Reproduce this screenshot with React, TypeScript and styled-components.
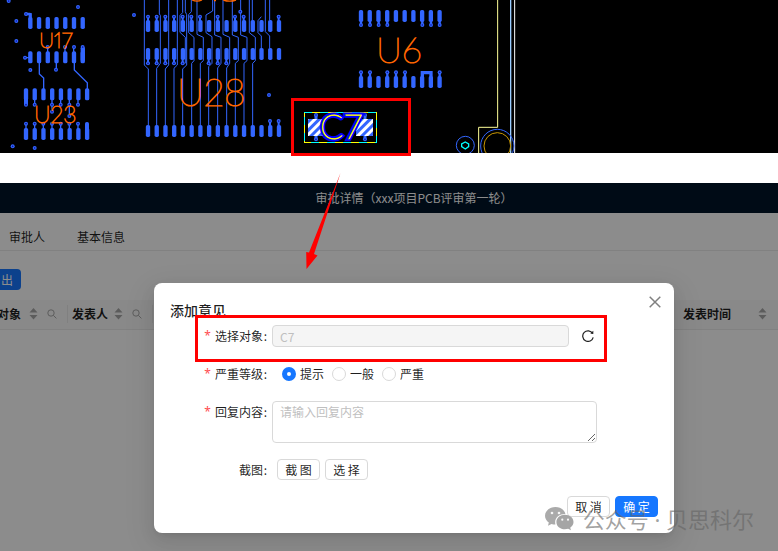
import React from "react";
import styled, { createGlobalStyle, css } from "styled-components";

const GlobalStyle = createGlobalStyle`
  *, *::before, *::after { box-sizing: border-box; }
  body {
    margin: 0;
    background: #fff;
    color: rgba(0, 0, 0, 0.88);
    font: 12px/20px "Noto Sans CJK SC", sans-serif;
  }
  button, input, textarea { font: inherit; color: inherit; }
`;

const Page = styled.div`
  position: relative;
  display: flex;
  flex-direction: column;
  gap: 30px;
  min-height: 100vh;
  overflow: hidden;
`;

/* ---------- board viewer ---------- */

const Board = styled.section`
  position: relative;
  background: #000;
`;

const BoardDrawing = styled.svg`
  display: block;
  width: 778px;
  height: 153px;
`;

const Silk = styled.text<{ $size: number }>`
  font-family: Lato, sans-serif;
  font-weight: 100;
  font-size: ${(p) => p.$size}px;
  font-variant-numeric: proportional-nums;
  fill: #ff6600;
  stroke: #ff6600;
  stroke-width: 1px;
`;

const HighlightBase = styled.text`
  font-family: Lato, sans-serif;
  font-weight: 100;
  font-size: 34px;
`;

const HighlightHalo = styled(HighlightBase)`
  fill: #0000ff;
  stroke: #0000ff;
  stroke-width: 5px;
`;

const HighlightLetters = styled(HighlightBase)`
  fill: #ffff00;
  stroke: #ffff00;
  stroke-width: 0.8px;
`;

const BLUE = "#3366ff";

type PadRowProps = { x: number; y: number; count: number; height?: number };
const PadRow = ({ x, y, count, height = 36 }: PadRowProps) => (
  <>
    {Array.from({ length: count }, (_, i) => (
      <rect key={i} x={x + i * 26.2 - 6.5} y={y} width={13} height={height} rx={5} fill={BLUE} />
    ))}
  </>
);

const Vias = ({ at }: { at: [number, number][] }) => (
  <>
    {at.map(([x, y]) => (
      <g key={`${x}-${y}`}>
        <circle cx={x} cy={y} r={6} fill={BLUE} />
        <circle cx={x} cy={y} r={2.5} fill="#0a14a0" />
      </g>
    ))}
  </>
);

const row = (xs: number[], y: number) => xs.map((x) => [x, y] as [number, number]);

const u28Traces = [
  "M43 0V195L55 207V375",
  "M88 0V42L91 46V190L80 205V375",
  "M116 0V195L106 207V375",
  "M142 0V195L132 205V375",
  "M166 0V35L170 44V195L158 207V375",
  "M158 0V38L150 46V97L166 112V190",
  "M184 0V35L176 44V98L192 112V182L185 190V375",
  "M201 0V103L220 112V182L211 190V375",
  "M248 0V33L228 45V98L246 110V190L236 200V375",
  "M254 0V105L273 112V190L263 204V375",
  "M279 0V103L299 112V190L290 204V375",
  "M307 0V105L325 112V182L316 190V375",
  "M332 0V105L351 112V182L342 190V375",
  "M358 0V98L376 112V182L368 190V375",
  "M367 0V62",
  "M394 50L384 62V98L394 108V145",
  "M406 0V95L419 108V145",
  "M419 0V60",
].join("");

const PcbView = () => (
  <BoardDrawing viewBox="0 0 778 153" role="img" aria-label="PCB">
    <defs>
      <pattern id="hatch" width="18" height="18" patternUnits="userSpaceOnUse" patternTransform="rotate(45)">
        <rect width="18" height="18" fill="#fff" />
        <rect width="9" height="18" fill={BLUE} />
      </pattern>
    </defs>

    <g transform="scale(.3333)">
      <path
        d="M118 185V222L131 234V270M223 185V210L262 248V270M169 185V209M143 142V160M195 142V160M221 142V160M78 41H93V60M75 173H90M78 290V314M104 290V314M156 290V335M182 290V314M208 290V348M234 290V314M78 370V390M104 370V390M130 370V390M156 370V390M182 370V390M208 370V390M234 370V390"
        fill="none"
        stroke={BLUE}
        strokeWidth="4"
      />
      <path d="M78 38H90Q95 38 95 44V60H86V46H78Z" fill={BLUE} />
      <PadRow x={91} y={51} count={7} />
      <PadRow x={91} y={154} count={7} />
      <rect x={242} y={140} width={13} height={45} rx={5} fill={BLUE} />
      <PadRow x={78} y={265} count={8} />
      <rect x={72} y={270} width={12} height={46} rx={5} fill={BLUE} />
      <PadRow x={78} y={384} count={8} />
      <rect x={255} y={366} width={12} height={50} rx={5} fill={BLUE} />
      <Vias
        at={[
          [26, 3], [234, 21], [49, 63], [49, 123], [78, 42], [75, 173], [91, 210], [168, 209],
          [38, 439], [104, 444], [156, 335], [208, 348], [402, 45],
          ...row([143, 195, 222, 248], 141),
          ...row([78, 104, 156, 182, 208, 234], 314),
          ...row([78, 104, 130, 156, 182, 208, 234], 371),
        ]}
      />
    </g>

    <g transform="translate(130) scale(.3333)">
      <path d={u28Traces} fill="none" stroke={BLUE} strokeWidth="3" />
      <PadRow x={54} y={60} count={16} />
      <PadRow x={54} y={144} count={16} />
      <PadRow x={54} y={375} count={16} />
      <path
        d="M54 50V64M80 50V64M106 50V64M132 50V64M158 50V64M184 50V64M210 50V64M263 50V64M315 50V64M341 50V64M446 50V64M54 176V190M80 176V190M106 176V190M132 176V190M158 176V190M236 176V190M263 176V190M289 176V190M420 363V380M446 363V380"
        stroke={BLUE}
        strokeWidth="6"
      />
      <Vias
        at={[
          [417, 285], [331, 35],
          ...row([54, 80, 106, 132, 158, 184, 210, 263, 315, 341, 446], 50),
          ...row([54, 80, 106, 132, 158, 236, 263, 289], 190),
          ...row([420, 446], 363),
        ]}
      />
      <path d="M186 0Q201 7 216 0M252 2H258M280 0Q299 7 318 0" fill="none" stroke="#ff6600" strokeWidth="4" />
    </g>

    <g transform="translate(340) scale(.3333)">
      <PadRow x={63} y={30} count={10} />
      <PadRow x={63} y={228} count={10} />
      <path
        d="M63 62V76M90 62V76M116 62V76M142 62V76M247 62V76M273 62V76M299 62V76M63 216V232M90 216V232M142 216V232M168 216V232M195 216V232M299 216V232"
        stroke={BLUE}
        strokeWidth="7"
      />
      <Vias at={[...row([63, 90, 116, 142, 247, 273, 299], 75), ...row([63, 90, 142, 168, 195, 299], 217)]} />
      <path d="M247 245V218H273V245" fill="none" stroke={BLUE} strokeWidth="10" />
      <g fill="none" strokeWidth="3">
        <path d="M473 0V382H416V460" stroke="#ffff99" />
        <path d="M512 0V460" stroke="#99ccff" strokeWidth="4" />
        <path d="M524 0V460" stroke="#fff" />
        <circle cx="376" cy="436" r="27" stroke={BLUE} />
        <path d="M376 426L386 432V440L376 447L365 440V432Z" stroke="#00ffff" strokeWidth="4" />
        <circle cx="472" cy="438" r="50" stroke={BLUE} />
        <circle cx="472" cy="438" r="40" stroke="#cc9900" />
      </g>
    </g>

    <Silk x="39" y="48" $size={21}>U17</Silk>
    <Silk x="34" y="123" $size={23}>U23</Silk>
    <Silk x="177" y="106" $size={37}>U28</Silk>
    <Silk x="376" y="63" $size={36}>U6</Silk>

    <g transform="translate(280 80) scale(.3333)">
      <rect x="73" y="97" width="217" height="90" fill="none" stroke="#ffff00" strokeWidth="3" shapeRendering="crispEdges" />
      <rect x="73" y="97" width="217" height="90" fill="none" stroke="#00ffff" strokeWidth="3" strokeDasharray="24 24" shapeRendering="crispEdges" />
      <path d="M108 105V120M108 165V178M255 105V120M255 165V178" stroke={BLUE} strokeWidth="9" />
      <Vias at={[[108, 105], [108, 178], [255, 105], [255, 178]]} />
      <rect x="84" y="117" width="51" height="51" fill="url(#hatch)" />
      <rect x="228" y="117" width="51" height="51" fill="url(#hatch)" />
    </g>
    <HighlightHalo x="320" y="139">C7</HighlightHalo>
    <HighlightLetters x="320" y="139">C7</HighlightLetters>
  </BoardDrawing>
);

/* ---------- annotations ---------- */

const Marker = styled.div<{ $target: "component" | "field" }>`
  position: absolute;
  border: 3px solid #ff0000;
  pointer-events: none;
  ${(p) =>
    p.$target === "component"
      ? css`
          left: 291px;
          top: 98px;
          width: 120px;
          height: 58px;
        `
      : css`
          left: 41px;
          top: 32px;
          width: 412px;
          height: 47px;
        `}
`;

const Arrow = styled.svg`
  position: absolute;
  left: 300px;
  top: 170px;
  width: 44px;
  height: 102px;
  pointer-events: none;
`;

/* ---------- review application ---------- */

const Review = styled.main`
  position: relative;
  flex: 1;
  display: flex;
  flex-direction: column;
  min-height: 368px;
  overflow: hidden;
`;

const TopBar = styled.header`
  display: flex;
  align-items: center;
  justify-content: center;
  height: 30px;
  padding-left: 50px;
  background: #001529;
  color: #fff;
`;

const TopTitle = styled.h1`
  margin: 0;
  font-size: 12px;
  font-weight: 400;
`;

const Tabs = styled.nav`
  display: flex;
  gap: 32px;
  height: 38px;
  padding: 14px 9px 0;
  border-bottom: 1px solid #ececec;
`;

const Tab = styled.button`
  height: 20px;
  padding: 0;
  border: 0;
  background: none;
`;

const Toolbar = styled.div`
  display: flex;
  padding: 18px 0 10px;
`;

const ExportButton = styled.button`
  height: 21px;
  padding: 0 8px 0 1px;
  border: 0;
  border-radius: 0 4px 4px 0;
  background: #1677ff;
  color: #fff;
`;

const Table = styled.table`
  width: 100%;
  border-collapse: collapse;
  table-layout: fixed;
`;

const HeadCell = styled.th<{ $width?: number; $divided?: boolean }>`
  width: ${(p) => (p.$width ? `${p.$width}px` : "auto")};
  height: 29px;
  padding: 0 11px 0 4px;
  background: ${(p) => (p.$divided ? "linear-gradient(#eaeaea, #eaeaea) right / 1px 18px no-repeat #fafafa" : "#fafafa")};
  border-bottom: 1px solid #ececec;
  text-align: left;
`;

const HeadContent = styled.div<{ $clipped?: boolean }>`
  display: flex;
  align-items: center;
  justify-content: space-between;
  margin-left: ${(p) => (p.$clipped ? "-7px" : "0")};
  white-space: nowrap;
`;

const HeadIcons = styled.span`
  display: flex;
  align-items: center;
  gap: 9px;
  margin-left: auto;
  color: #a8a8a8;
`;

const SortIcon = () => (
  <svg width="9" height="12" viewBox="0 0 9 12" fill="currentColor" aria-hidden="true">
    <path d="M4.5 0L8.5 4.6H.5ZM4.5 11.6L.5 7H8.5Z" />
  </svg>
);

const SearchIcon = () => (
  <svg width="10" height="10" viewBox="0 0 10 10" fill="none" stroke="currentColor" aria-hidden="true">
    <circle cx="4" cy="4" r="3.2" />
    <path d="M6.4 6.4L9.4 9.4" />
  </svg>
);

const Mask = styled.div`
  position: absolute;
  inset: 0;
  background: rgba(0, 0, 0, 0.45);
`;

const ModalLayer = styled.div`
  position: absolute;
  inset: 100px 0 auto;
  display: flex;
  justify-content: center;
  padding-left: 50px;
`;

const Modal = styled.form`
  position: relative;
  width: 520px;
  padding: 17px 16px 16px 0;
  border-radius: 8px;
  background: #fff;
  box-shadow: 0 6px 16px rgba(0, 0, 0, 0.08), 0 3px 6px -4px rgba(0, 0, 0, 0.12), 0 9px 28px 8px rgba(0, 0, 0, 0.05);
`;

const ModalTitle = styled.h2`
  margin: 0;
  padding-left: 16px;
  font-size: 14px;
  line-height: 20px;
  font-weight: 500;
`;

const CloseButton = styled.button`
  position: absolute;
  top: 11px;
  right: 11px;
  display: grid;
  place-items: center;
  width: 16px;
  height: 16px;
  padding: 0;
  border: 0;
  background: none;
  color: #808080;
`;

const Fields = styled.div`
  display: grid;
  grid-template-columns: 114px 1fr;
  column-gap: 4px;
  row-gap: 16px;
  align-items: start;
  padding: 5px 61px 15px 0;
`;

const labelStyle = css`
  display: flex;
  justify-content: flex-end;
  line-height: 22px;
  white-space: nowrap;
`;

const Label = styled.label`
  ${labelStyle}
`;

const GroupLabel = styled.span`
  ${labelStyle}
`;

const Required = styled.span`
  margin-right: 4px;
  color: #ff4d4f;
  font-family: "Noto Sans", sans-serif;
`;

const Colon = styled.span`
  width: 5px;
  text-align: center;
`;

const ObjectControl = styled.div`
  display: flex;
  align-items: center;
  gap: 12px;
  margin-right: 2px;
`;

const TextInput = styled.input`
  flex: 1;
  min-width: 0;
  height: 22px;
  padding: 0 7px;
  border: 1px solid #d9d9d9;
  border-radius: 4px;
  background: #f5f5f5;
  color: #bfbfbf;
`;

const IconButton = styled.button`
  display: grid;
  place-items: center;
  width: 14px;
  height: 14px;
  padding: 0;
  border: 0;
  background: none;
`;

const RadioGroup = styled.div`
  display: flex;
  gap: 8px;
  padding-left: 10px;
`;

const RadioLabel = styled.label`
  display: flex;
  align-items: center;
  gap: 4px;
  line-height: 22px;
`;

const Radio = styled.input`
  appearance: none;
  width: 14px;
  height: 14px;
  margin: 0;
  border: 1px solid #d9d9d9;
  border-radius: 50%;
  background: #fff;
  &:checked {
    border: 5px solid #1677ff;
  }
`;

const TextArea = styled.textarea`
  display: block;
  width: 100%;
  height: 42px;
  padding: 0 7px;
  border: 1px solid #d9d9d9;
  border-radius: 4px;
  background: #fff;
  resize: vertical;
  &::placeholder {
    color: #bfbfbf;
  }
`;

const ButtonRow = styled.div<{ $end?: boolean }>`
  display: flex;
  gap: 5px;
  justify-content: ${(p) => (p.$end ? "flex-end" : "flex-start")};
  padding-left: 5px;
`;

const Button = styled.button<{ $primary?: boolean }>`
  width: 43px;
  height: 21px;
  padding: 0;
  border: 1px solid ${(p) => (p.$primary ? "#1677ff" : "#d9d9d9")};
  border-radius: 4px;
  background: ${(p) => (p.$primary ? "#1677ff" : "#fff")};
  color: ${(p) => (p.$primary ? "#fff" : "inherit")};
  line-height: 18px;
  white-space: pre;
`;

const Watermark = styled.div`
  position: absolute;
  right: 24px;
  bottom: 17px;
  display: flex;
  align-items: center;
  gap: 9px;
  color: rgba(100, 100, 100, 0.6);
  font-family: "Noto Sans", "Noto Sans CJK SC", sans-serif;
  font-size: 22px;
  line-height: 30px;
  white-space: pre;
  pointer-events: none;
`;

const WeChatIcon = () => (
  <svg width="29" height="24" viewBox="0 0 29 24" aria-hidden="true">
    <path
      d="M10.5 0C4.700 0 0 3.900 0 8.800C0 11.600 1.500 13.900 3.800 15.600L3 18.700L6.500 16.900C7.800 17.300 9 17.500 10.400 17.500C9 11.500 13.500 7 20.400 7C19.500 2.900 15.500 0 10.500 0Z"
      fill="#aaa"
    />
    <path
      d="M28.500 15C28.500 10.900 24.600 7.800 20 7.800C15 7.800 11.400 11 11.400 15C11.400 19.200 15 22.300 20 22.300C21 22.300 22.200 22.100 23.200 21.800L26 23.300L25.200 20.700C27.200 19.300 28.500 17.400 28.500 15Z"
      fill="#a5a5a5"
    />
    <g fill="#f5f5f5">
      <circle cx="7" cy="6" r="1.300" />
      <circle cx="14" cy="6" r="1.300" />
      <circle cx="17.300" cy="12.700" r="1.100" />
      <circle cx="23" cy="12.700" r="1.100" />
    </g>
  </svg>
);

export default function App() {
  return (
    <Page>
      <GlobalStyle />
      <Board>
        <PcbView />
        <Marker $target="component" />
      </Board>

      <Review>
        <TopBar>
          <TopTitle>审批详情（xxx项目PCB评审第一轮）</TopTitle>
        </TopBar>
        <Tabs>
          <Tab type="button">审批人</Tab>
          <Tab type="button">基本信息</Tab>
        </Tabs>
        <Toolbar>
          <ExportButton type="button">出</ExportButton>
        </Toolbar>
        <Table>
          <thead>
            <tr>
              <HeadCell $width={68} $divided>
                <HeadContent $clipped>
                  对象
                  <HeadIcons><SortIcon /><SearchIcon /></HeadIcons>
                </HeadContent>
              </HeadCell>
              <HeadCell $width={85} $divided>
                <HeadContent>
                  发表人
                  <HeadIcons><SortIcon /><SearchIcon /></HeadIcons>
                </HeadContent>
              </HeadCell>
              <HeadCell>
                <HeadContent>
                  <HeadIcons><SearchIcon /></HeadIcons>
                </HeadContent>
              </HeadCell>
              <HeadCell $width={99}>
                <HeadContent>
                  发表时间
                  <HeadIcons><SortIcon /></HeadIcons>
                </HeadContent>
              </HeadCell>
            </tr>
          </thead>
        </Table>

        <Mask />

        <ModalLayer>
          <Modal role="dialog" aria-labelledby="modal-title" onSubmit={(e) => e.preventDefault()}>
            <ModalTitle id="modal-title">添加意见</ModalTitle>
            <CloseButton type="button" aria-label="关闭">
              <svg width="12" height="12" viewBox="0 0 12 12" fill="none" stroke="currentColor" strokeWidth="1.500">
                <path d="M.7 .7L11.300 11.300M11.300 .7L.7 11.300" />
              </svg>
            </CloseButton>

            <Fields>
              <Label htmlFor="object"><Required>*</Required>选择对象<Colon>:</Colon></Label>
              <ObjectControl>
                <TextInput id="object" value="C7" disabled readOnly />
                <IconButton type="button" aria-label="刷新">
                  <svg width="12" height="12" viewBox="0 0 12 12" fill="none" stroke="#222" strokeWidth="1.200">
                    <path d="M10.600 3.400A5.300 5.300 0 1 0 11.200 7.300" />
                    <path d="M11.300 .8V3.900L8.300 3.600Z" fill="#222" stroke="none" />
                  </svg>
                </IconButton>
              </ObjectControl>

              <GroupLabel id="level"><Required>*</Required>严重等级<Colon>:</Colon></GroupLabel>
              <RadioGroup role="radiogroup" aria-labelledby="level">
                <RadioLabel><Radio type="radio" name="level" defaultChecked />提示</RadioLabel>
                <RadioLabel><Radio type="radio" name="level" />一般</RadioLabel>
                <RadioLabel><Radio type="radio" name="level" />严重</RadioLabel>
              </RadioGroup>

              <Label htmlFor="reply"><Required>*</Required>回复内容<Colon>:</Colon></Label>
              <TextArea id="reply" placeholder="请输入回复内容" />

              <GroupLabel id="shot">截图<Colon>:</Colon></GroupLabel>
              <ButtonRow role="group" aria-labelledby="shot">
                <Button type="button">截 图</Button>
                <Button type="button">选 择</Button>
              </ButtonRow>
            </Fields>

            <ButtonRow $end>
              <Button type="button">取 消</Button>
              <Button type="submit" $primary>确 定</Button>
            </ButtonRow>
            <Marker $target="field" />
          </Modal>
        </ModalLayer>

        <Watermark>
          <WeChatIcon />
          <span>公众号 · 贝思科尔</span>
        </Watermark>
      </Review>

      <Arrow viewBox="0 0 44 102" aria-hidden="true">
        <path d="M40.500 3L14 84L17.500 85.500L6.500 99L6.200 82L9 82.500Z" fill="#ff0000" />
      </Arrow>
    </Page>
  );
}
